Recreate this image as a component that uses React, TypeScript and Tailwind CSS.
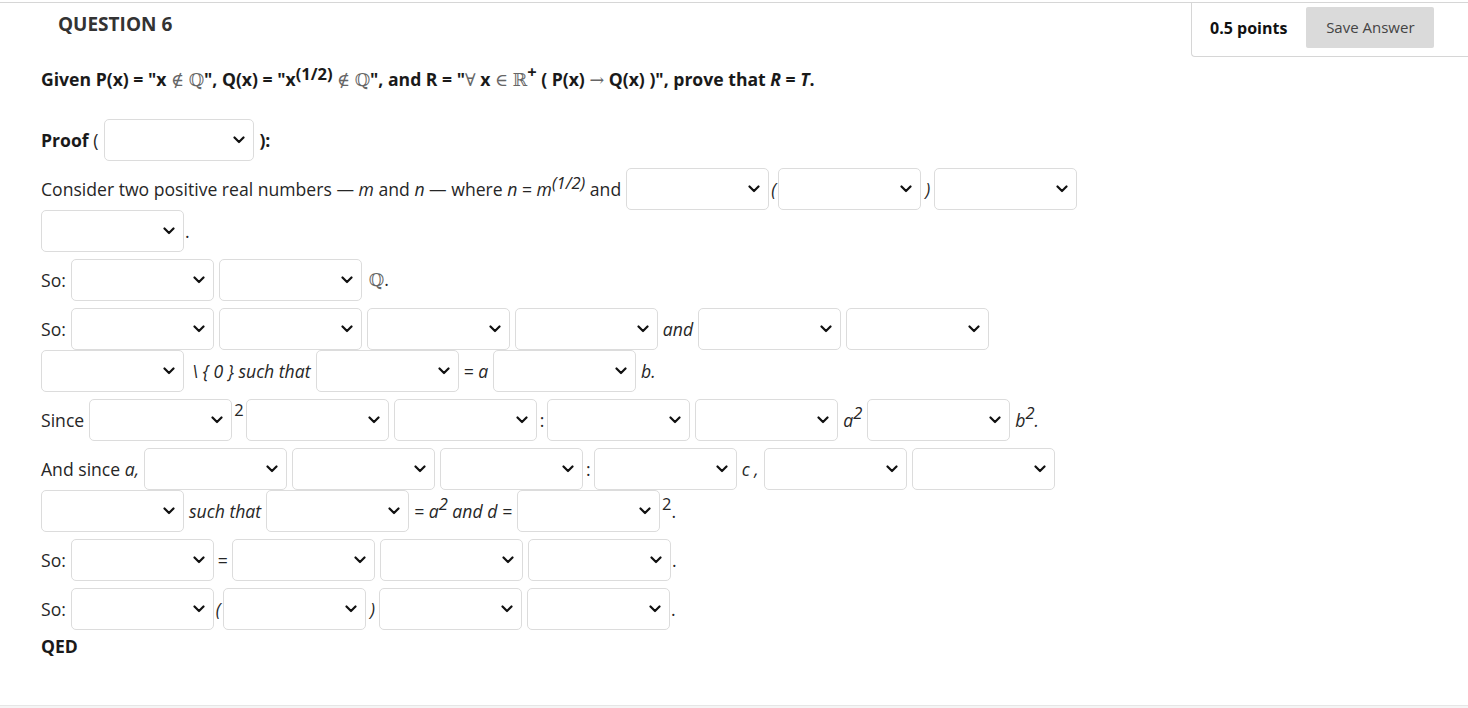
import React from "react";

function Chevron() {
  return (
    <svg width="12" height="8" viewBox="0 0 12 8" fill="none">
      <polyline points="1.5,1.5 6,6 10.5,1.5" stroke="#111" strokeWidth="2.2" strokeLinecap="round" strokeLinejoin="round" />
    </svg>
  );
}

function Sel({ w = "w-[143px]" }: { w?: string }) {
  return (
    <div className={`${w} h-[42px] shrink-0 border border-[#dcdcdc] rounded-[5px] bg-white flex items-center justify-end pr-[8px]`}>
      <Chevron />
    </div>
  );
}

function M({ children }: { children: React.ReactNode }) {
  return <span className="font-normal text-[#666]" style={{ fontFamily: '"DejaVu Serif", serif' }}>{children}</span>;
}

function Sup({ children, top = "-top-[7px]" }: { children: React.ReactNode; top?: string }) {
  return <span className={`relative ${top} text-[16.5px] leading-none`}>{children}</span>;
}

function I({ children }: { children: React.ReactNode }) {
  return <span className="italic">{children}</span>;
}

function Line({ children }: { children: React.ReactNode }) {
  return <div className="flex h-[42px] items-center gap-[5px] whitespace-nowrap">{children}</div>;
}

function Para({ children }: { children: React.ReactNode }) {
  return <div className="mt-[7px]">{children}</div>;
}

function Open() {
  return (
    <span className="-mx-[3px]">
      <I>(</I>
    </span>
  );
}

function Close() {
  return (
    <span className="-mx-[1px]">
      <I>)</I>
    </span>
  );
}

export default function App() {
  return (
    <div className="w-full h-[708px] bg-white flex flex-col text-[#262626] text-[17.6px]" style={{ fontFamily: '"Open Sans", "Noto Sans", sans-serif' }}>
      <div className="mt-[2px] border-t border-[#d6d6d6] flex justify-between items-start">
        <h2 className="pl-[58px] pt-[9px] text-[19px] leading-[24px] font-bold text-[#333]">QUESTION 6</h2>
        <div className="w-[277px] border-l border-b border-[#d6d6d6] rounded-bl-[4px] pt-[4px] pb-[8px] pl-[18px] flex items-center gap-[19px]">
          <span className="font-bold text-[16px] text-[#111]">0.5 points</span>
          <button className="w-[128px] h-[41px] bg-[#dadada] text-[#444] text-[15px] rounded-[2px]">Save Answer</button>
        </div>
      </div>

      <div className="pl-[41px]">
        <p className="mt-[10px] leading-[24px] font-bold text-[#1a1a1a] whitespace-nowrap">
          Given P(x) = "x <M>∉</M> <M>ℚ</M>", Q(x) = "x<Sup top="-top-[6px]">(1/2)</Sup> <M>∉</M> <M>ℚ</M>", and R = "<M>∀</M> x <M>∈</M> <M>ℝ</M>
          <Sup top="-top-[8px]">+</Sup> ( P(x) <M>→</M> Q(x) )", prove that <i>R</i> = <i>T</i>.
        </p>

        <div className="mt-[27px]">
          <Line>
            <span>
              <b className="text-[#1a1a1a]">Proof</b> (
            </span>
            <div className="ml-[1px]">
              <Sel w="w-[150px]" />
            </div>
            <b className="text-[#1a1a1a]">):</b>
          </Line>
        </div>

        <Para>
          <Line>
            <span>
              Consider two positive real numbers — <I>m</I> and <I>n</I> — where <I>n</I> = <I>m</I>
              <Sup>
                <I>(1/2)</I>
              </Sup>{" "}
              and
            </span>
            <Sel />
            <Open />
            <Sel />
            <Close />
            <Sel />
          </Line>
          <Line>
            <Sel />
            <span className="-ml-[4px]">.</span>
          </Line>
        </Para>

        <Para>
          <Line>
            <span>So:</span>
            <Sel />
            <Sel />
            <span className="ml-[2px]">
              <M>ℚ</M>.
            </span>
          </Line>
        </Para>

        <Para>
          <Line>
            <span>So:</span>
            <Sel />
            <Sel />
            <Sel />
            <Sel />
            <I>and</I>
            <Sel />
            <Sel />
          </Line>
          <Line>
            <Sel />
            <span className="ml-[3px]">
              <I>\ {"{"} 0 {"}"} such that</I>
            </span>
            <Sel />
            <I>= a</I>
            <Sel />
            <I>b.</I>
          </Line>
        </Para>

        <Para>
          <Line>
            <span>Since</span>
            <Sel />
            <span className="-mx-[3px]">
              <Sup top="-top-[11px]">2</Sup>
            </span>
            <Sel />
            <Sel />
            <span className="-mx-[2px]">:</span>
            <Sel />
            <Sel />
            <I>
              a<Sup top="-top-[8px]">2</Sup>
            </I>
            <Sel />
            <I>
              b<Sup top="-top-[8px]">2</Sup>.
            </I>
          </Line>
        </Para>

        <Para>
          <Line>
            <span>
              And since <I>a,</I>
            </span>
            <Sel />
            <Sel />
            <Sel />
            <span className="-mx-[2px]">:</span>
            <Sel />
            <I>c ,</I>
            <Sel />
            <Sel />
          </Line>
          <Line>
            <Sel />
            <I>such that</I>
            <Sel />
            <I>
              = a<Sup top="-top-[8px]">2</Sup> and d =
            </I>
            <Sel />
            <span className="-ml-[3px]">
              <Sup top="-top-[8px]">2</Sup>.
            </span>
          </Line>
        </Para>

        <Para>
          <Line>
            <span>So:</span>
            <Sel />
            <span className="-mx-[1px]">=</span>
            <Sel />
            <Sel />
            <Sel />
            <span className="-ml-[4px]">.</span>
          </Line>
        </Para>

        <Para>
          <Line>
            <span>So:</span>
            <Sel />
            <Open />
            <Sel />
            <Close />
            <Sel />
            <Sel />
            <span className="-ml-[4px]">.</span>
          </Line>
        </Para>

        <p className="mt-[5px] leading-[22px] font-bold text-[#1a1a1a]">QED</p>
      </div>

      <div className="flex-1" />
      <div className="h-[3px] border-t border-[#e6e6e6] bg-[#f5f5f5]" />
    </div>
  );
}
